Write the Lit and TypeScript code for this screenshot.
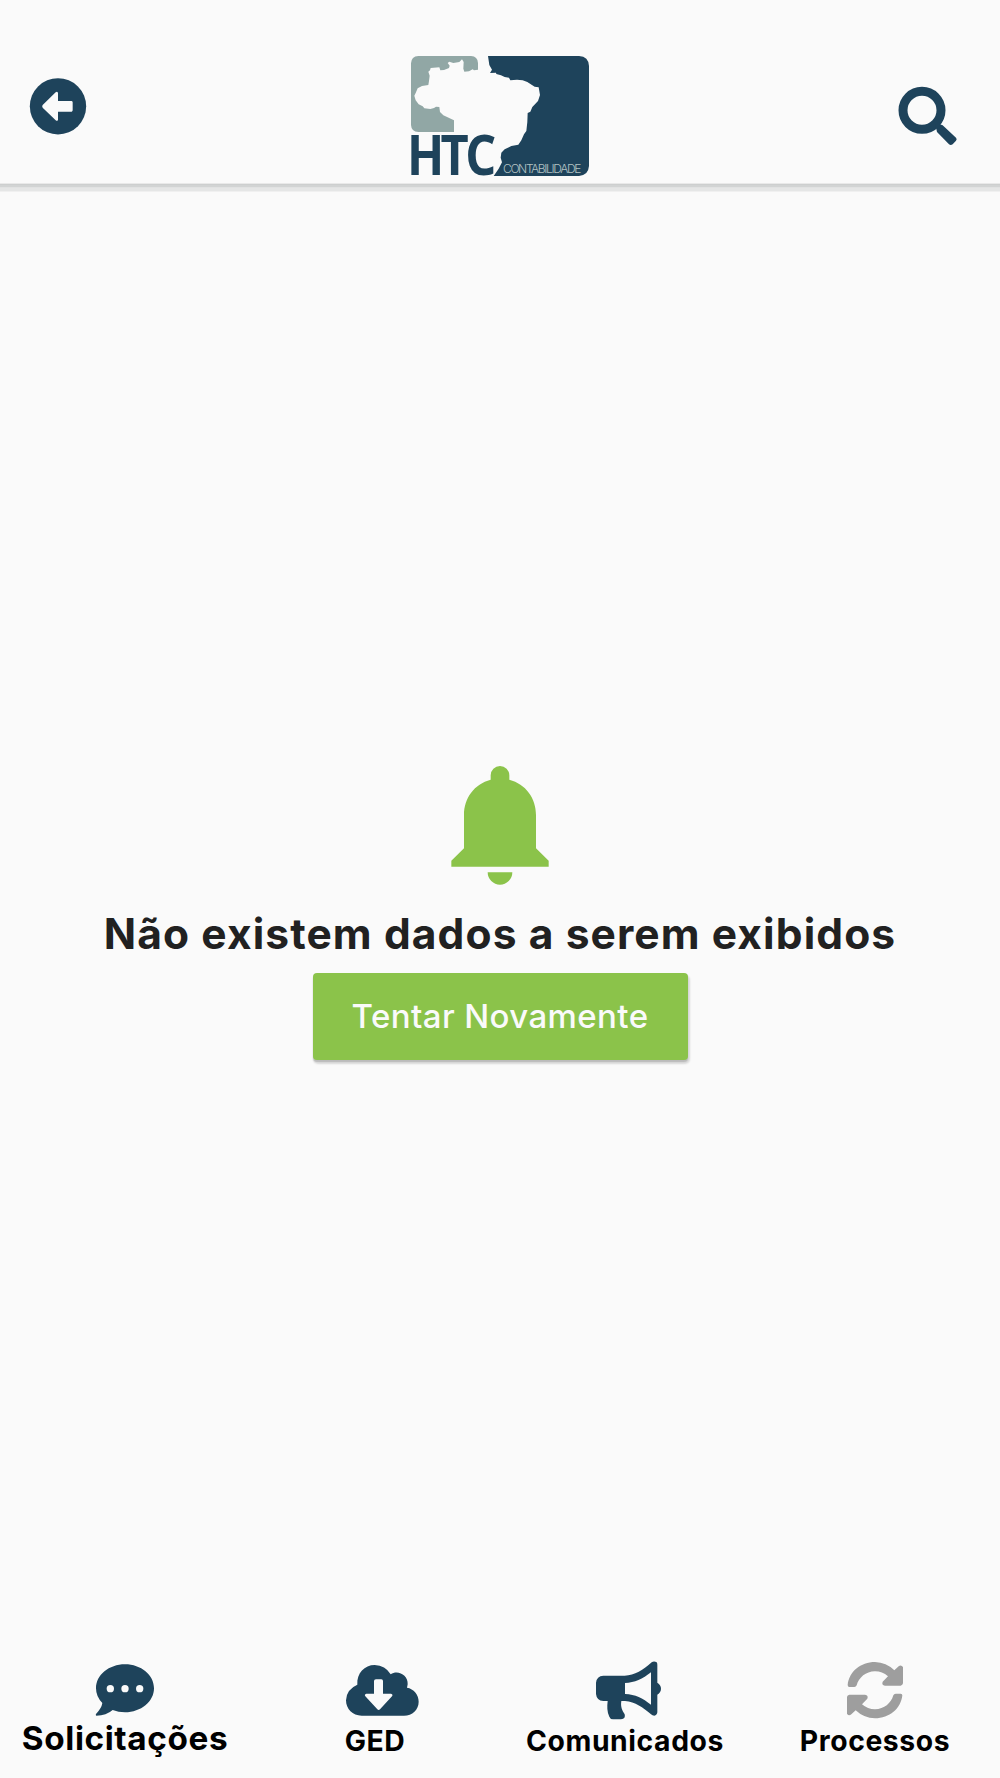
import { LitElement, html, css, svg } from "lit";
import { customElement } from "lit/decorators.js";

const logo = svg`
  <path fill="#91a7a5" d="M55 33H213Q233 34 234 54V74L222 76 218 73 207 79 193 80 190 71 191 51 186 43 178 51 160 54 148 50 143 54 149 62 147 69 132 75 121 76 118 67 92 69 90 76 85 80 89 92 87 108 85 120 66 123 53 130 47 144 43 152 47 166 56 178 68 184 73 190 91 192 102 189 108 185 118 186 120 201 130 211 162 226V261H55Q34 260 33 240V55Q34 34 55 33Z"/>
  <path fill="#1e435b" d="M264 33H537Q566 35 567 63V363Q565 391 537 393H281L296 371 306 352 302 338 304 323 314 313 334 303 355 299 364 286 372 268 379 258 382 231 383 204 391 200 397 186 414 168 420 150 416 127 404 125 382 111 368 106 351 104 331 106 327 98 314 96 303 91 289 87 288 83 270 84 276 74 268 60Z"/>
  <text class="htc" transform="scale(.87 1)" x="24 140 225" y="390">HTC</text>
  <text class="sub" x="309" y="384" textLength="235" lengthAdjust="spacing">CONTABILIDADE</text>`;

const chat = svg`
  <path d="M376 72C424 72 463 104 463 144S424 216 376 216Q356 216 339 209Q320 226 290 226Q287 225 289 221Q306 203 308 188Q289 169 289 144C289 104 328 72 376 72Z"/>
  <g class="hole"><circle cx="332" cy="145" r="11"/><circle cx="376" cy="145" r="11"/><circle cx="420" cy="145" r="11"/></g>`;

const cloud = svg`
  <path d="M125 226C98 226 78 206 78 180Q79 147 112 133C110 98 134 74 164 74Q196 75 212 102C233 87 265 104 263 132L261 142C281 145 296 163 296 184C296 208 277 226 252 226Z"/>
  <path class="hole" d="M168 117H184Q189 117 189 122V160H213Q220 162 216 168L180 207Q176 211 172 207L136 168Q132 162 139 160H162V122Q162 117 168 117Z"/>`;

const horn = svg`
  <path fill-rule="evenodd" d="M280 106H344C374 106 400 88 425 66Q432 61 440 66Q442 69 442 73V127Q453 134 453 145T442 163V216Q441 225 433 226Q427 226 423 222C399 201 376 185 345 182H334C331 200 337 210 344 222Q348 236 333 237H309Q301 237 298 229C291 214 291 199 293 182H280Q260 181 258 161V127Q260 107 280 106ZM345 128V161C376 162 398 174 423 193V96C398 116 374 127 345 128Z"/>`;

const refresh = svg`
  <path d="M203 134C207 94 242 65 285 65Q319 66 343 90L356 78Q363 72 369 80V129Q368 135 362 136H315Q304 134 308 124L324 108Q307 93 285 93C257 94 237 111 230 135Q228 140 223 140H208Q203 140 203 134Z"/>
  <path d="M367 165C363 205 328 234 285 234Q251 233 227 210L214 222Q206 228 201 220V170Q202 164 208 163H255Q266 165 262 175L246 192Q263 207 285 207C313 206 333 189 340 165Q342 160 347 160H362Q367 160 367 165Z"/>`;

@customElement("app-root")
export class AppRoot extends LitElement {
  static styles = css`
    :host {
      display: flex;
      flex-direction: column;
      width: 1000px;
      height: 1778px;
      overflow: hidden;
      background: #fafafa;
      font-family: Inter, "Liberation Sans", sans-serif;
      font-weight: 600;
      color: #212121;
    }
    svg { display: block; flex: none; fill: #1e435b; overflow: visible; }
    .hole { fill: #fafafa; }
    header {
      display: flex;
      justify-content: space-between;
      box-sizing: border-box;
      height: 183px;
      padding: 55px 43px 0 30px;
    }
    .back { margin-top: 23px; }
    .find { margin-top: 31px; }
    .logo { margin-left: 15px; }
    .htc { font: 700 168px "Open Sans", sans-serif; }
    .sub { font: 300 36px Inter, sans-serif; fill: #b3c2c3; }
    .edge {
      flex: none;
      height: 9px;
      background: linear-gradient(#e9e9e9 0 1px, #cdcfcf 1px 2px, #d2d4d4 2px 4px, #e1e2e2 4px 5px, #e5e6e6 5px 8px, #f0f0f0 8px);
    }
    main {
      flex: 1;
      display: flex;
      flex-direction: column;
      align-items: center;
      padding-top: 574px;
    }
    .bell { fill: #8bc34a; }
    h1 {
      margin: 24px 0 0;
      font-size: 42.5px;
      line-height: 50px;
      font-weight: 700;
      letter-spacing: 1.1px;
      white-space: nowrap;
    }
    button {
      width: 375px;
      height: 87px;
      margin-top: 14px;
      padding: 0 0 2px;
      border: 0;
      border-radius: 4px;
      background: #8bc34a;
      box-shadow: 0 2px 1px #0002, 1px 3px 2px 1px #0002;
      color: #fafafa;
      font: 500 33px/40px Inter, "Liberation Sans", sans-serif;
      letter-spacing: 0.4px;
    }
    nav {
      display: grid;
      grid-template-columns: repeat(4, 250px);
      height: 118px;
      color: #000;
    }
    .tab { display: flex; flex-direction: column; align-items: center; }
    .tab span { font-size: 28.3px; line-height: 34px; margin-top: 6px; font-weight: 700; letter-spacing: 0.6px; white-space: nowrap; }
    .tab .big { font-size: 33.3px; line-height: 40px; margin-top: 0; }
    .cloud { margin-left: 14px; }
    .horn { margin-left: 7px; }
    .grey { fill: #9e9e9e; }
  `;

  render() {
    return html`
      <header>
        <svg class="back" width="56" height="57" viewBox="90 114 168 171">
          <circle cx="174" cy="199" r="84.5" />
          <path class="hole" d="M167 157Q172 153 174 159V183H215Q218 184 218 187V211Q218 214 215 215H174V239Q172 245 167 241L128 203Q125 199 128 195Z" />
        </svg>
        <svg class="logo" width="180" height="122" viewBox="30 30 540 366">${logo}</svg>
        <svg class="find" width="59" height="59" viewBox="114 78 177 177">
          <circle cx="186" cy="151" r="57" fill="none" stroke="#1e435b" stroke-width="27" />
          <path d="M229 207L225 192 238 192 248 196 288 233Q292 238 288 242L278 253Q272 257 267 253L231 216Z" />
        </svg>
      </header>
      <div class="edge"></div>
      <main>
        <svg class="bell" width="98" height="119" viewBox="63 47 294 357">
          <path d="M182 88V75A28 28 0 0 1 238 75V88C287 101 318 143 318 194V294L356 331V349H64V331L102 294V194C102 143 133 101 182 88ZM173 366H247A37 37 0 0 1 173 366Z" />
        </svg>
        <h1>Não existem dados a serem exibidos</h1>
        <button>Tentar Novamente</button>
      </main>
      <nav>
        <div class="tab">
          <svg width="58" height="58" viewBox="289 59 174 174">${chat}</svg>
          <span class="big">Solicitações</span>
        </div>
        <div class="tab">
          <svg class="cloud" width="73" height="58" viewBox="78 59 219 174">${cloud}</svg>
          <span>GED</span>
        </div>
        <div class="tab">
          <svg class="horn" width="65" height="58" viewBox="258 59 195 174">${horn}</svg>
          <span>Comunicados</span>
        </div>
        <div class="tab">
          <svg class="grey" width="56" height="58" viewBox="201 59 168 174">${refresh}</svg>
          <span>Processos</span>
        </div>
      </nav>
    `;
  }
}
